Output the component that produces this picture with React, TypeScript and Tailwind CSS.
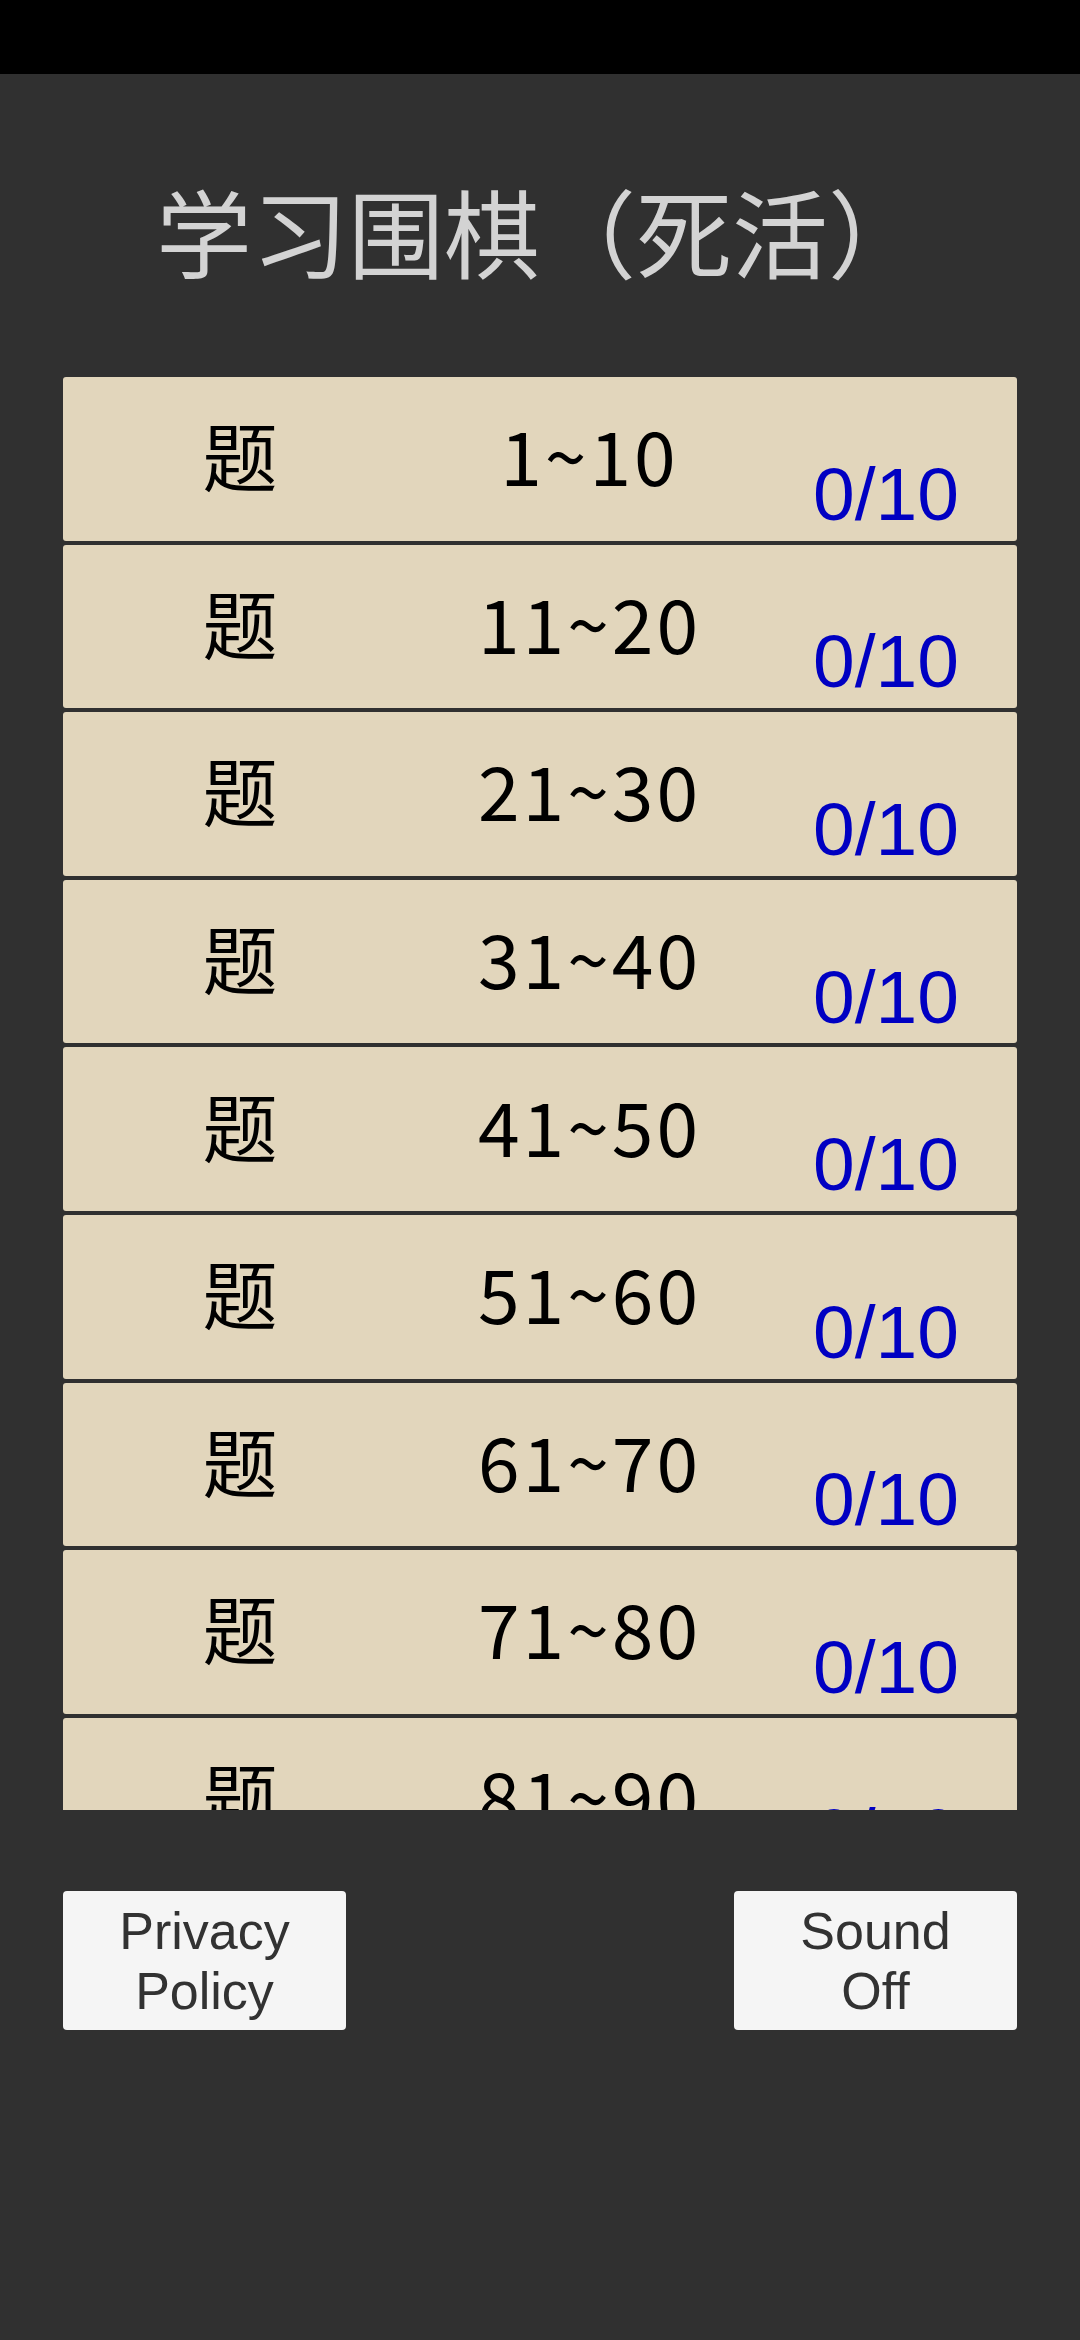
import React from 'react';

const ranges = ['1~10', '11~20', '21~30', '31~40', '41~50', '51~60', '61~70', '71~80', '81~90', '91~100'];

const cjk = { fontFamily: '"Noto Sans CJK SC", sans-serif' };
const latin = { fontFamily: '"Liberation Sans", "Noto Sans CJK SC", sans-serif' };

function LevelRow({ range }: { range: string }) {
  return (
    <div className="flex h-[163.6px] shrink-0 items-center rounded-[3px] bg-[#e2d6bc] text-[75px] leading-none">
      <div className="flex w-[354px] justify-center pb-[10px] text-black" style={cjk}>题</div>
      <div className="flex w-[342px] justify-center pb-[10px] pl-[3px] tracking-[3px] text-black" style={cjk}>
        {range}
      </div>
      <div className="flex w-[254px] justify-center pt-[71px] text-[#0000c2]" style={latin}>0/10</div>
    </div>
  );
}

function MenuButton({ label }: { label: string }) {
  return (
    <button className="flex h-[139px] w-[283px] items-center justify-center rounded-[4px] bg-[#f5f5f5]">
      <span className="max-w-[200px] text-center text-[52px] leading-[60px] text-[#323232]">{label}</span>
    </button>
  );
}

export default function App() {
  return (
    <div className="flex h-[2340px] w-[1080px] flex-col bg-[#303030]" style={latin}>
      <div className="h-[74px] shrink-0 bg-black" />

      <h1 className="mt-[108px] text-center text-[96px] font-normal leading-none text-[#d3d3d3]" style={cjk}>
        学习围棋（死活）
      </h1>

      <div className="mx-[63px] mt-[99px] flex h-[1433px] flex-col gap-[4px] overflow-hidden">
        {ranges.map((r) => (
          <LevelRow key={r} range={r} />
        ))}
      </div>

      <div className="mt-[81px] flex justify-between px-[63px]">
        <MenuButton label="Privacy Policy" />
        <MenuButton label="Sound Off" />
      </div>
    </div>
  );
}
